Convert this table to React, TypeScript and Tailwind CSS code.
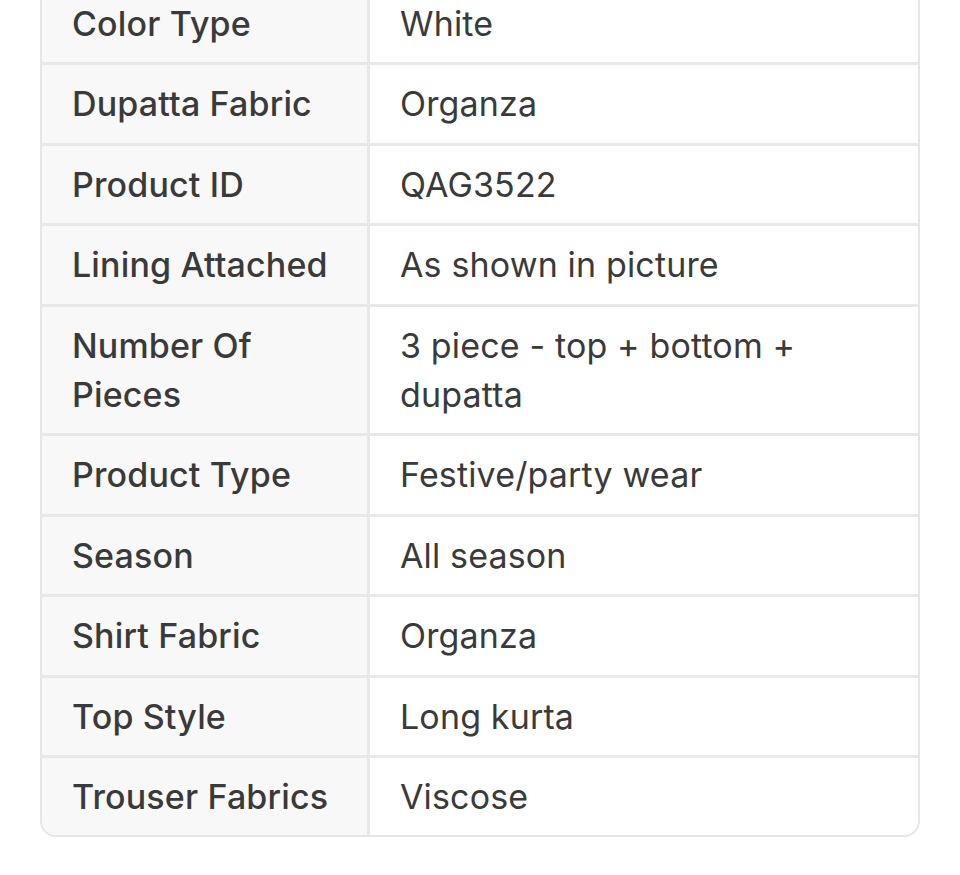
const rows: [string, string][] = [
  ['Color Type', 'White'],
  ['Dupatta Fabric', 'Organza'],
  ['Product ID', 'QAG3522'],
  ['Lining Attached', 'As shown in picture'],
  ['Number Of Pieces', '3 piece - top + bottom + dupatta'],
  ['Product Type', 'Festive/party wear'],
  ['Season', 'All season'],
  ['Shirt Fabric', 'Organza'],
  ['Top Style', 'Long kurta'],
  ['Trouser Fabrics', 'Viscose'],
];

export default function App() {
  return (
    <div className="w-[960px] h-[875px] overflow-hidden bg-white" style={{ fontFamily: 'Inter, "Noto Sans", sans-serif' }}>
      <div className="mx-[40px] mt-[-17px] border-2 border-[#e6e6e6] rounded-b-[16px] overflow-hidden text-[#3a3a3a] text-[34px] leading-[49.4px] tracking-[0.15px]">
        {rows.map(([k, v], i) => (
          <div key={k} className={i === 0 ? 'flex' : 'flex border-t-[3px] border-[#e8e8e8]'}>
            <div className="w-[328px] shrink-0 bg-[#f8f8f8] border-r-[3px] border-[#e8e8e8] pl-[30px] pr-[20px] py-[14px] font-medium">
              {k === 'Number Of Pieces' ? <>Number Of<br />Pieces</> : k}
            </div>
            <div className="flex-1 pl-[30px] pr-[60px] py-[14px]">{v}</div>
          </div>
        ))}
      </div>
    </div>
  );
}
